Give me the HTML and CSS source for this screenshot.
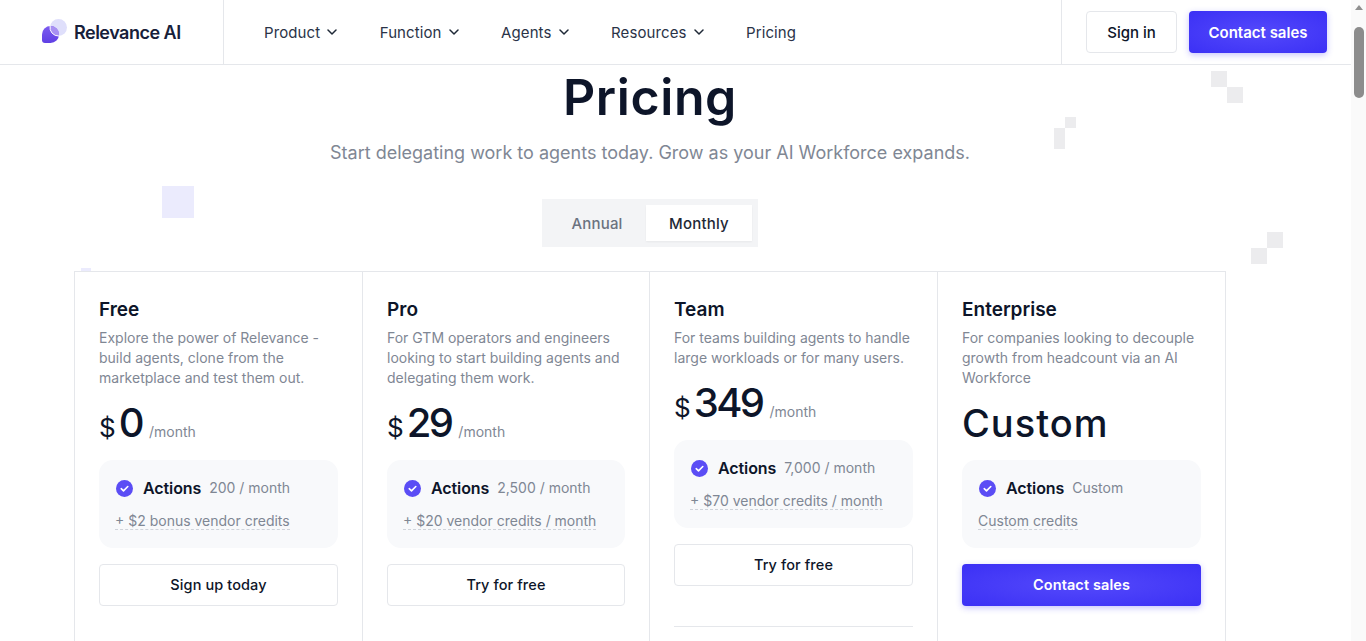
FILE: index.html
```html
<!DOCTYPE html>
<html lang="en">
<head>
<meta charset="utf-8">
<title>Pricing - Relevance AI</title>
<link rel="stylesheet" href="styles.css">
</head>
<body>
<div class="shell">
  <div class="page">
    <header class="nav">
      <a class="brand" href="#">
        <svg class="brand-mark" width="25" height="25" viewBox="0 0 25 25" aria-hidden="true">
          <defs><linearGradient id="lg" x1="0" y1="0" x2="0" y2="1"><stop offset="0" stop-color="#7d5cf0"/><stop offset="1" stop-color="#5f3fe4"/></linearGradient></defs>
          <circle cx="16.500" cy="8.500" r="8.500" fill="#dfdffb"/>
          <path d="M0 15.500A8.500 8.500 0 0 1 8.500 7A8.500 8.500 0 0 1 17 15.500A8.500 8.500 0 0 1 8.500 24L3 24A3 3 0 0 1 0 21Z" fill="url(#lg)"/>
          <path d="M8.100 7A8.500 8.500 0 0 0 16.900 17A8.500 8.500 0 0 0 8.100 7Z" fill="#a890f2"/>
          <path d="M8.100 7A8.500 8.500 0 0 0 16.900 17" fill="none" stroke="#fff" stroke-width="1"/>
        </svg>
        <span class="brand-name">Relevance AI</span>
      </a>
      <nav class="links">
        <a href="#">Product <svg class="chev" viewBox="0 0 10 6"><path d="M1 1l4 4 4-4"/></svg></a>
        <a href="#">Function <svg class="chev" viewBox="0 0 10 6"><path d="M1 1l4 4 4-4"/></svg></a>
        <a href="#">Agents <svg class="chev" viewBox="0 0 10 6"><path d="M1 1l4 4 4-4"/></svg></a>
        <a href="#">Resources <svg class="chev" viewBox="0 0 10 6"><path d="M1 1l4 4 4-4"/></svg></a>
        <a href="#">Pricing</a>
      </nav>
      <div class="nav-actions">
        <a class="btn btn-ghost nav-btn signin" href="#">Sign in</a>
        <a class="btn btn-primary nav-btn contact" href="#">Contact sales</a>
      </div>
    </header>

    <main class="content">
      <i class="px px-a"></i><i class="px px-b"></i><i class="px px-c"></i><i class="px px-d"></i>
      <i class="px px-e"></i><i class="px px-f"></i><i class="px px-h tint"></i><i class="px px-i tint"></i>

      <h1 class="title">Pricing</h1>
      <p class="lede">Start delegating work to agents today. Grow as your AI Workforce expands.</p>
      <div class="toggle">
        <span class="opt">Annual</span>
        <span class="opt active">Monthly</span>
      </div>

      <section class="plans">
        <article class="plan">
          <h2>Free</h2>
          <p class="desc">Explore the power of Relevance - build agents, clone from the marketplace and test them out.</p>
          <div class="price"><span class="cur">$</span><span class="amt">0</span><span class="per">/month</span></div>
          <div class="box">
            <div class="row"><svg class="tick" viewBox="0 0 17 17"><circle cx="8.500" cy="8.500" r="8.500"/><path d="M5.200 8.700l2.300 2.200 4.300-4.400"/></svg><b>Actions</b><span>200 / month</span></div>
            <span class="credits">+ $2 bonus vendor credits</span>
          </div>
          <a class="btn btn-ghost cta" href="#">Sign up today</a>
        </article>

        <article class="plan">
          <h2>Pro</h2>
          <p class="desc">For GTM operators and engineers looking to start building agents and delegating them work.</p>
          <div class="price"><span class="cur">$</span><span class="amt">29</span><span class="per">/month</span></div>
          <div class="box">
            <div class="row"><svg class="tick" viewBox="0 0 17 17"><circle cx="8.500" cy="8.500" r="8.500"/><path d="M5.200 8.700l2.300 2.200 4.300-4.400"/></svg><b>Actions</b><span>2,500 / month</span></div>
            <span class="credits">+ $20 vendor credits / month</span>
          </div>
          <a class="btn btn-ghost cta" href="#">Try for free</a>
        </article>

        <article class="plan">
          <h2>Team</h2>
          <p class="desc">For teams building agents to handle large workloads or for many users.</p>
          <div class="price"><span class="cur">$</span><span class="amt">349</span><span class="per">/month</span></div>
          <div class="box">
            <div class="row"><svg class="tick" viewBox="0 0 17 17"><circle cx="8.500" cy="8.500" r="8.500"/><path d="M5.200 8.700l2.300 2.200 4.300-4.400"/></svg><b>Actions</b><span>7,000 / month</span></div>
            <span class="credits">+ $70 vendor credits / month</span>
          </div>
          <a class="btn btn-ghost cta" href="#">Try for free</a>
          <hr class="rule">
        </article>

        <article class="plan">
          <h2>Enterprise</h2>
          <p class="desc">For companies looking to decouple growth from headcount via an AI Workforce</p>
          <div class="price custom"><span class="amt">Custom</span></div>
          <div class="box">
            <div class="row"><svg class="tick" viewBox="0 0 17 17"><circle cx="8.500" cy="8.500" r="8.500"/><path d="M5.200 8.700l2.300 2.200 4.300-4.400"/></svg><b>Actions</b><span>Custom</span></div>
            <span class="credits">Custom credits</span>
          </div>
          <a class="btn btn-primary cta" href="#">Contact sales</a>
        </article>
      </section>
    </main>
  </div>
  <div class="scrollbar" aria-hidden="true">
    <div class="arrow"></div>
    <div class="thumb"></div>
  </div>
</div>
</body>
</html>
```

FILE: styles.css
```css
* { box-sizing: border-box; }
html, body { margin: 0; height: 100%; overflow: hidden; }
body { font-family: Inter, "Liberation Sans", sans-serif; color: #0d1529; background: #fff; }
a { color: inherit; text-decoration: none; }

.shell { display: flex; height: 641px; }
.page { width: 1351px; height: 641px; overflow: hidden; display: flex; flex-direction: column; }

.scrollbar { width: 15px; background: #fafafa; padding-top: 5px; }
.arrow { width: 0; height: 0; margin: 0 auto; border: 4.500px solid transparent; border-top: 0; border-bottom: 5px solid #8f8f8f; }
.thumb { width: 10px; height: 71px; margin: 17px auto 0; border-radius: 5px; background: #8c8c8c; }

.nav { flex: none; height: 65px; display: flex; border-bottom: 1px solid #e5e7eb; background: #fff; }
.brand { width: 224px; padding-left: 42px; display: flex; align-items: center; gap: 7px; border-right: 1px solid #e5e7eb; }
.brand-mark { flex: none; margin-top: -1px; }
.brand-name { font-size: 18px; font-weight: 600; letter-spacing: -.5px; color: #17203a; }
.links { flex: 1; display: flex; align-items: center; gap: 42.500px; padding-left: 40px; font-size: 15px; letter-spacing: .1px; color: #2a3347; }
.links a { display: flex; align-items: center; gap: 7px; }
.chev { width: 10px; height: 6px; fill: none; stroke: #1f2937; stroke-width: 1.500; stroke-linecap: round; stroke-linejoin: round; }
.nav-actions { width: 290px; display: flex; align-items: center; gap: 12px; padding-left: 24px; border-left: 1px solid #e5e7eb; }

.btn { display: flex; align-items: center; justify-content: center; border-radius: 4px; font-size: 15px; font-weight: 500; }
.btn-ghost { background: #fff; border: 1px solid #e5e7eb; color: #0d1529; }
.btn-primary { color: #fff; font-weight: 600; background: radial-gradient(ellipse at center, #5449fb 0%, #3b30f5 100%); box-shadow: 0 2px 6px rgba(70, 60, 245, .3); }
.nav-btn { height: 42px; }
.signin { width: 91px; }
.contact { width: 138px; }

.content { position: relative; flex: 1; min-height: 0; display: flex; flex-direction: column; align-items: center; padding: 1px 51px 0 0; }
.title { margin: 0; font-size: 50px; line-height: 62px; font-weight: 600; letter-spacing: .6px; color: #0d1529; }
.lede { margin: 11px 0 0; font-size: 18px; line-height: 28px; color: #7f8794; }
.toggle { margin-top: 32px; width: 216px; height: 48px; padding: 6px; display: flex; background: #f3f4f6; font-size: 15px; font-weight: 500; letter-spacing: .2px; }
.opt { display: flex; align-items: center; justify-content: center; color: #6b7280; }
.opt:first-child { width: 98px; }
.opt.active { width: 106px; background: #fff; color: #1f2937; box-shadow: 0 1px 2px rgba(0,0,0,.05); }

.plans { position: relative; margin-top: 24px; width: 1152px; display: grid; grid-template-columns: 287px 287px 288px 288px; border: 1px solid #e5e7eb; border-bottom: 0; flex: 1; min-height: 0; }
.plan { padding: 25px 24px 0; border-left: 1px solid #e5e7eb; }
.plan:first-child { border-left: 0; }
.plan h2 { margin: 0; font-size: 19px; line-height: 26px; font-weight: 600; color: #0d1529; }
.desc { margin: 5px 0 0; font-size: 14px; line-height: 20px; color: #7f8794; }
.price { display: flex; align-items: baseline; margin-top: 4px; height: 60px; padding-top: 3px; }
.cur { font-size: 26px; margin-right: 3px; }
.amt { font-size: 40px; font-weight: 500; letter-spacing: -2.600px; line-height: 56px; }
.per { font-size: 14px; color: #7f8794; margin-left: 7px; }
.custom { height: 60px; }
.custom .amt { font-size: 38px; letter-spacing: 1px; }

.box { margin-top: 8px; height: 88px; padding: 17px 15px 0 16px; border-radius: 14px; background: #f8f9fb; }
.row { display: flex; align-items: center; height: 22px; font-size: 14px; color: #7f8794; }
.row span { margin-bottom: 2px; }
.tick { width: 17px; height: 17px; margin: 0 10px 0 1px; flex: none; }
.tick circle { fill: #5b4df5; }
.tick path { fill: none; stroke: #fff; stroke-width: 1.600; stroke-linecap: round; stroke-linejoin: round; }
.row b { font-size: 16px; font-weight: 600; color: #0d1529; margin-right: 8px; letter-spacing: -.1px; }
.credits { display: inline-block; margin-top: 14px; font-size: 14px; line-height: 16px; color: #7f8794; border-bottom: 1px dashed #cfd3da; }

.cta { margin-top: 16px; height: 42px; padding-bottom: 1px; font-size: 14.500px; letter-spacing: .1px; }
.rule { margin: 40px 0 0; border: 0; border-top: 1px solid #e5e7eb; }

.px { position: absolute; width: 16px; height: 16px; background: #ececee; }
.tint { background: #ebebfd; }
.px-a { left: 1211px; top: 6px; }
.px-b { left: 1227px; top: 22px; }
.px-c { left: 1065px; top: 52px; width: 11px; height: 11px; }
.px-d { left: 1054px; top: 63px; width: 11px; height: 21px; }
.px-e { left: 1267px; top: 167px; }
.px-f { left: 1251px; top: 183px; }
.px-h { left: 162px; top: 121px; width: 32px; height: 32px; }
.px-i { left: 81px; top: 203px; width: 10px; height: 3px; }
```
